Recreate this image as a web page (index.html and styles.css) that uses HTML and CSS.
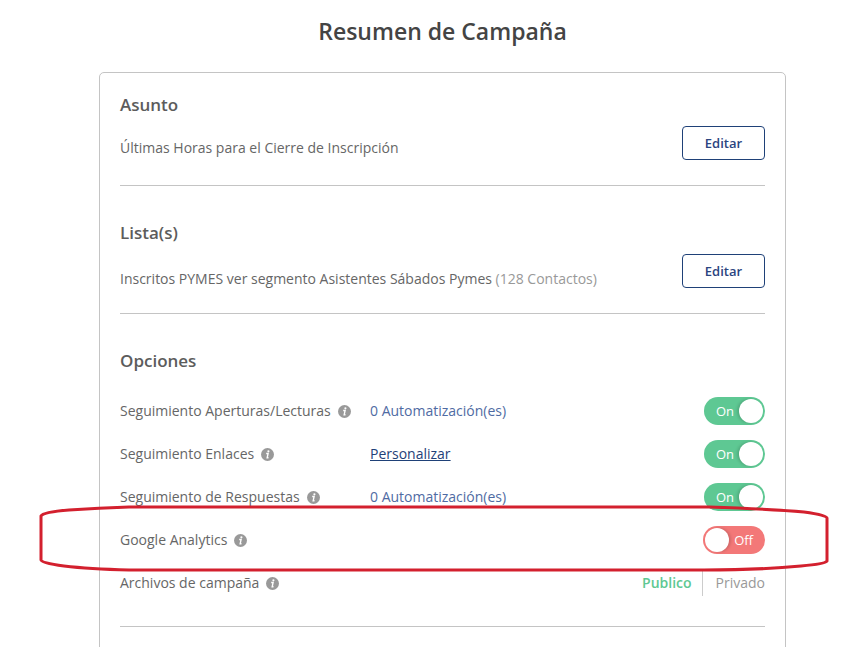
FILE: index.html
```html
<!DOCTYPE html>
<html lang="es">
<head>
  <meta charset="UTF-8">
  <meta name="viewport" content="width=device-width, initial-scale=1.0">
  <title>Resumen de Campaña</title>
  <link rel="stylesheet" href="styles.css">
</head>
<body>
  <!-- icono de ayuda compartido -->
  <svg class="sprite" aria-hidden="true">
    <symbol id="info" viewBox="0 0 13 13">
      <circle cx="6.5" cy="6.5" r="6.5" fill="#999"/>
      <circle cx="7.4" cy="3.3" r="1.1" fill="#fff"/>
      <path d="M5.2 5.5h1.9L6.2 9.7h1.3" fill="none" stroke="#fff" stroke-width="1.4"/>
    </symbol>
  </svg>

  <main class="page">
    <h1>Resumen de Campaña</h1>

    <div class="card">
      <section class="block">
        <h2>Asunto</h2>
        <div class="summary">
          <p class="subject">Últimas Horas para el Cierre de Inscripción</p>
          <button type="button" class="btn-edit">Editar</button>
        </div>
      </section>

      <section class="block">
        <h2>Lista(s)</h2>
        <div class="summary">
          <p>Inscritos PYMES ver segmento Asistentes Sábados Pymes <span class="muted">(128 Contactos)</span></p>
          <button type="button" class="btn-edit">Editar</button>
        </div>
      </section>

      <section class="block">
        <h2>Opciones</h2>
        <div class="options">
          <div class="option">
            <label class="name" for="opens">Seguimiento Aperturas/Lecturas <svg class="info"><use href="#info"/></svg></label>
            <a class="auto" href="#">0 Automatización(es)</a>
            <label class="switch">
              <input type="checkbox" id="opens" checked>
              <span class="track on">On</span>
            </label>
          </div>
          <div class="option">
            <label class="name" for="links">Seguimiento Enlaces <svg class="info"><use href="#info"/></svg></label>
            <a class="custom" href="#">Personalizar</a>
            <label class="switch">
              <input type="checkbox" id="links" checked>
              <span class="track on">On</span>
            </label>
          </div>
          <div class="option">
            <label class="name" for="replies">Seguimiento de Respuestas <svg class="info"><use href="#info"/></svg></label>
            <a class="auto" href="#">0 Automatización(es)</a>
            <label class="switch">
              <input type="checkbox" id="replies" checked>
              <span class="track on">On</span>
            </label>
          </div>
          <div class="option marked">
            <label class="name" for="analytics">Google Analytics <svg class="info"><use href="#info"/></svg></label>
            <span></span>
            <label class="switch">
              <input type="checkbox" id="analytics">
              <span class="track off">Off</span>
            </label>
            <!-- trazo rojo alrededor de la fila -->
            <svg class="marker" viewBox="0 0 790 68" preserveAspectRatio="none" aria-hidden="true">
              <path d="M2 11Q4 7 30 5Q60 3 90 2H670Q730 4 765 7Q788 10 788 13V56Q786 59 762 61Q720 65 665 65H90Q50 64 25 61Q2 58 2 55Z"/>
            </svg>
          </div>
          <div class="option">
            <span class="name">Archivos de campaña <svg class="info"><use href="#info"/></svg></span>
            <span></span>
            <div class="privacy">
              <button type="button" class="active">Publico</button>
              <button type="button">Privado</button>
            </div>
          </div>
        </div>
      </section>
    </div>
  </main>
</body>
</html>
```

FILE: styles.css
```css
* {
  box-sizing: border-box;
}

body {
  margin: 0;
  height: 100vh;
  overflow: hidden;
  background: #fff;
  color: #666;
  font-family: "Open Sans", "Noto Sans", sans-serif;
  font-size: 14px;
  line-height: 20px;
}

.sprite {
  position: absolute;
  width: 0;
  height: 0;
}

.page {
  padding: 16px 69px 0 99px;
}

h1 {
  margin: 0 0 26px;
  color: #444;
  font-size: 23px;
  font-weight: 600;
  line-height: 30px;
  text-align: center;
}

.card {
  display: flex;
  flex-direction: column;
  gap: 15px;
  padding: 0 20px 40px;
  border: 1px solid #c4c4c4;
  border-radius: 5px;
}

.block {
  padding: 17px 0 25px;
  border-bottom: 1px solid #c4c4c4;
}

h2 {
  margin: 0 0 6px;
  color: #5c5c5c;
  font-size: 17px;
  font-weight: 600;
  line-height: 30px;
}

.summary {
  display: flex;
  align-items: flex-end;
  justify-content: space-between;
}

p {
  margin: 0;
  line-height: 18px;
}

.subject {
  padding-bottom: 3px;
}

.muted {
  color: #999;
}

button {
  background: none;
  font-family: inherit;
  cursor: pointer;
}

.btn-edit {
  width: 83px;
  height: 34px;
  padding: 0;
  border: 1px solid #1f4178;
  border-radius: 4px;
  color: #2b4580;
  font-size: 13px;
  font-weight: 600;
}

/* opciones */
.options {
  display: flex;
  flex-direction: column;
  gap: 15px;
  padding: 15px 0 4px;
}

.option {
  display: grid;
  grid-template-columns: 250px 1fr auto;
  align-items: center;
  height: 28px;
}

.name {
  display: flex;
  align-items: center;
  gap: 7px;
}

.info {
  width: 13px;
  height: 13px;
}

.auto {
  color: #4f6ba3;
  text-decoration: none;
}

.custom {
  justify-self: start;
  color: #1f4178;
}

.switch {
  position: relative;
  cursor: pointer;
}

.switch input {
  position: absolute;
  inset: 0;
  margin: 0;
  opacity: 0;
}

.track {
  display: block;
  width: 61px;
  height: 28px;
  padding: 0 12px;
  border-radius: 14px;
  color: #fff;
  font-size: 13px;
  line-height: 28px;
}

.track::after {
  content: "";
  position: absolute;
  top: 2px;
  width: 24px;
  height: 24px;
  border-radius: 50%;
  background: #fff;
}

.on {
  background: #5ec893;
}

.on::after {
  right: 2px;
  box-shadow: -2px 0 3px rgba(0, 0, 0, 0.15);
}

.off {
  width: 62px;
  background: #f37878;
  text-align: right;
}

.off::after {
  left: 2px;
  box-shadow: 2px 0 3px rgba(0, 0, 0, 0.15);
}

.marked {
  position: relative;
}

.marker {
  position: absolute;
  top: -21px;
  left: -81px;
  width: calc(100% + 145px);
  height: 68px;
  pointer-events: none;
}

.marker path {
  fill: none;
  stroke: #d3202e;
  stroke-width: 3;
}

.privacy {
  display: flex;
}

.privacy button {
  height: 26px;
  padding: 0 0 2px 13px;
  border: 0;
  color: #999;
  font-size: 14px;
}

.privacy .active {
  padding: 0 10px 2px 0;
  border-right: 1px solid #ccc;
  color: #5ec893;
  font-weight: 600;
}
```
